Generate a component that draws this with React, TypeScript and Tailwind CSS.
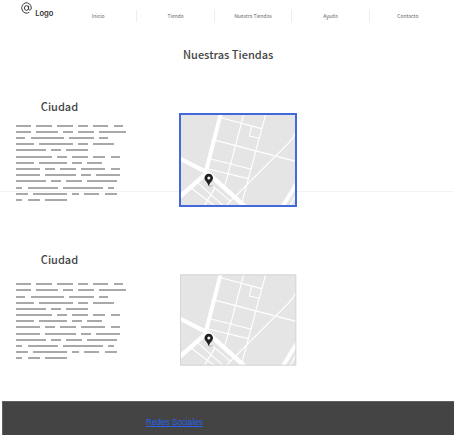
const fonts = "font-['Noto_Sans_CJK_SC','Open_Sans',sans-serif]";

const words: number[][] = [
  [5, 5, 5, 3, 5, 3],
  [5, 7, 3, 5, 9],
  [3, 11, 8, 3],
  [6, 11, 3, 7],
  [10, 3, 7],
  [12, 3, 5, 4, 3],
  [6, 9, 3, 5],
  [8, 3, 5, 8, 3],
  [8, 10, 3, 8],
  [10, 3, 5, 10],
  [2, 10, 13, 2],
  [4, 11, 2, 5, 4],
  [2, 4, 7],
];

function Placeholder({ wide }: { wide: number[] }) {
  return (
    <div className="flex flex-col">
      {words.map((row, i) => (
        <div key={i} className={`flex h-[2px] gap-[5.6px] ${wide.includes(i) ? "mb-[5px]" : "mb-[4px]"}`}>
          {row.map((n, j) => (
            <span key={j} className="h-[2px] shrink-0 bg-[#a9a9a9]" style={{ width: n * 2.985 + 0.37 }} />
          ))}
        </div>
      ))}
    </div>
  );
}

function StoreMap({ selected = false }: { selected?: boolean }) {
  return (
    <svg className="relative block h-[94px] w-[118px]" viewBox="27 24 354 282">
      <svg x="30" y="28" width="348" height="274" viewBox="30 28 348 274">
        <rect x="30" y="28" width="348" height="274" fill="#e5e5e5" />
        <g fill="none" stroke="#fff" strokeWidth="3.5">
          <path d="M156 39L274 71M221 28L165 241M287 28L216 292M245 64L238 93L266 99M137 106L378 169M123 162L241 192M115 192L234 221M378 82Q371 99 354 116L168 302M82 232L160 302M64 250L134 302M115 232L182 290M134 250L103 302M360 302L378 270" />
          <path d="M152 28L107 202" strokeWidth="12" />
          <path d="M28 160L112 203L226 305M112 203L28 276" strokeWidth="13" />
          <path d="M338 304L382 233" strokeWidth="12" />
        </g>
      </svg>
      <ellipse cx="121" cy="242" rx="9" ry="3" fill="#c5c5c5" />
      <path d="M116 243C112 230 103.500 227 103.500 219A12.750 12.750 0 0 1 129 219C129 228 120 231 116 243Z" fill="#202020" />
      <circle cx="116.5" cy="219" r="4.5" fill="#f5f5f5" />
      {selected ? (
        <rect x="30" y="27" width="348" height="276" fill="none" stroke="#4169dc" strokeWidth="6" />
      ) : (
        <rect x="31.5" y="29.5" width="346" height="271" fill="none" stroke="#d5d5d5" strokeWidth="3" />
      )}
    </svg>
  );
}

const links = ["Inicio", "Tienda", "Nuestra Tiendas", "Ayuda", "Contacto"];

function Store({ selected = false }: { selected?: boolean }) {
  return (
    <section className={`flex items-start ${selected ? "h-[153px]" : "h-[150px]"}`}>
      <div className="w-[179px] shrink-0 pl-[15.6px]">
        <h2 className={`pl-[25.2px] text-[11px] leading-[16px] font-medium text-[#444] ${selected ? "mb-[11px]" : "mb-[16px]"}`}>
          Ciudad
        </h2>
        <Placeholder wide={selected ? [4, 9] : [1, 7]} />
      </div>
      <div className={selected ? "pt-[15px]" : "pt-[22px]"}>
        <StoreMap selected={selected} />
      </div>
    </section>
  );
}

export default function App() {
  return (
    <div className={`relative flex h-[435px] w-[454px] flex-col overflow-hidden bg-white ${fonts}`}>
      <div className="absolute top-[191px] left-0 h-px w-full bg-[#f3f3f3]" />
      <header className="flex h-[46px] shrink-0 items-start">
        <div className="flex w-[60px] shrink-0 items-start pl-[21px]">
          <svg className="mt-[2px] h-[12px] w-[11px] shrink-0" viewBox="0 0 24 24" fill="none" stroke="#333" strokeWidth="2" preserveAspectRatio="none">
            <circle cx="12" cy="12" r="4.6" />
            <path d="M16.6 7.4v6.2c0 4 5.8 3.5 5.8-1.6A10.4 10.4 0 1 0 17.8 20.6" />
          </svg>
          <span className="ml-[3.2px] mt-[8px] font-['Inter',sans-serif] text-[7.6px] leading-[11px] font-semibold text-[#333]">Logo</span>
        </div>
        <nav className="mt-[10px] flex h-[12px] w-[386px] items-center">
          {links.map((link, i) => (
            <a key={link} className={`flex h-[12px] flex-1 items-center justify-center text-[5px] leading-[12px] whitespace-nowrap text-[#666] ${i < 4 ? "border-r border-[#eee]" : ""}`}>
              {link}
            </a>
          ))}
        </nav>
      </header>
      <h1 className="h-[52px] shrink-0 pl-[183px] text-[11px] leading-[16px] font-medium whitespace-nowrap text-[#444]">Nuestras Tiendas</h1>
      <Store selected />
      <Store />
      <footer className="ml-[2px] flex h-[34px] shrink-0 items-start border-t border-l border-[#606060] bg-[#444] pt-[15px] pl-[143px]">
        <a className="font-['Liberation_Sans',sans-serif] text-[8.2px] leading-[12px] text-[#2563f0] underline">Redes Sociales</a>
      </footer>
    </div>
  );
}
